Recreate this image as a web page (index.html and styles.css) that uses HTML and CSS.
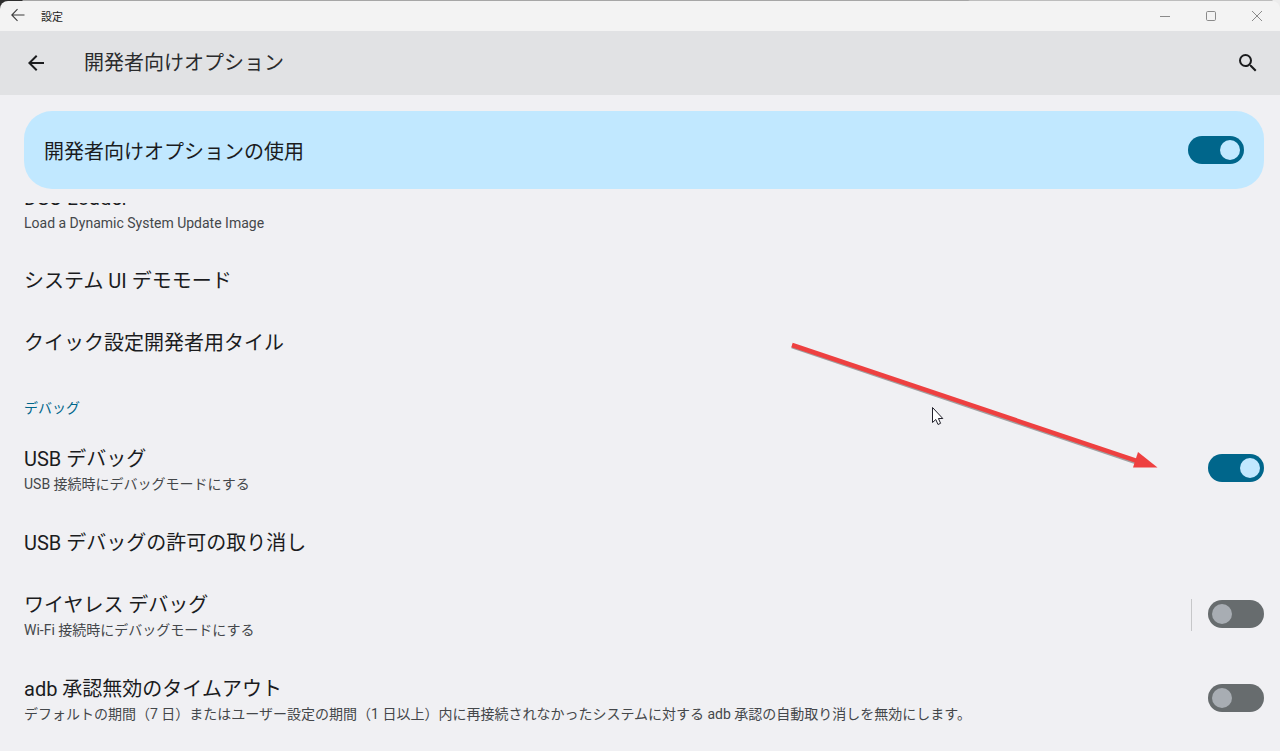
FILE: index.html
```html
<!DOCTYPE html>
<html lang="ja">
<head>
<meta charset="utf-8">
<title>設定</title>
<link rel="stylesheet" href="styles.css">
</head>
<body>
<div class="window">
  <header class="titlebar">
    <svg class="tb-back" width="16" height="16" viewBox="0 0 16 16"><path d="M14.5 8H2M7.5 2.2 1.8 8l5.7 5.8" fill="none" stroke="#3c3c3c" stroke-width="1.1"/></svg>
    <span class="tb-title">設定</span>
    <div class="tb-controls">
      <svg class="tb-btn" width="46" height="30" viewBox="0 0 46 30"><path d="M18 15.5h10" stroke="#8a8a8a" stroke-width="1"/></svg>
      <svg class="tb-btn" width="46" height="30" viewBox="0 0 46 30"><rect x="18.5" y="10.5" width="9" height="9" rx="1.2" fill="none" stroke="#8a8a8a"/></svg>
      <svg class="tb-btn" width="46" height="30" viewBox="0 0 46 30"><path d="M18 10l10 10M28 10 18 20" stroke="#8a8a8a" stroke-width="1"/></svg>
    </div>
  </header>
  <div class="appbar">
    <svg class="ab-back" width="24" height="24" viewBox="0 0 24 24"><path d="M20 11H7.83l5.59-5.59L12 4l-8 8 8 8 1.41-1.41L7.83 13H20v-2z" fill="#1b1c1e"/></svg>
    <h1 class="ab-title">開発者向けオプション</h1>
    <svg class="ab-search" width="24" height="24" viewBox="0 0 24 24"><path d="M15.5 14h-.79l-.28-.27A6.47 6.47 0 0 0 16 9.5 6.5 6.5 0 1 0 9.5 16c1.61 0 3.09-.59 4.23-1.57l.27.28v.79l5 4.99L20.49 19l-4.99-5zm-6 0C7.01 14 5 11.99 5 9.5S7.01 5 9.5 5 14 7.01 14 9.5 11.99 14 9.5 14z" fill="#1b1c1e"/></svg>
  </div>
  <main class="content">
    <section class="hero">
      <span class="hero-label">開発者向けオプションの使用</span>
      <span class="switch on on-hero"><span class="knob"></span></span>
    </section>
    <div class="list">
      <div class="scroll">
        <div class="row two first">
          <div class="text"><div class="title">DSU Loader</div><div class="sub">Load a Dynamic System Update Image</div></div>
        </div>
        <div class="row one"><div class="title">システム UI デモモード</div></div>
        <div class="row one"><div class="title">クイック設定開発者用タイル</div></div>
        <div class="category">デバッグ</div>
        <div class="row two">
          <div class="text"><div class="title">USB デバッグ</div><div class="sub">USB 接続時にデバッグモードにする</div></div>
          <span class="switch on"><span class="knob"></span></span>
        </div>
        <div class="row one"><div class="title">USB デバッグの許可の取り消し</div></div>
        <div class="row two">
          <div class="text"><div class="title">ワイヤレス デバッグ</div><div class="sub">Wi-Fi 接続時にデバッグモードにする</div></div>
          <span class="divider"></span>
          <span class="switch"><span class="knob"></span></span>
        </div>
        <div class="row two">
          <div class="text"><div class="title">adb 承認無効のタイムアウト</div><div class="sub">デフォルトの期間（7 日）またはユーザー設定の期間（1 日以上）内に再接続されなかったシステムに対する adb 承認の自動取り消しを無効にします。</div></div>
          <span class="switch"><span class="knob"></span></span>
        </div>
      </div>
    </div>
  </main>
  <svg class="annotation" width="1280" height="751" viewBox="0 0 1280 751">
    <path d="M792 346.2 1142 464" stroke="#7d7d7d" stroke-width="4.5" fill="none" opacity=".7"/>
    <path d="M792 345 1142 462.6" stroke="#ee4040" stroke-width="4.5" fill="none"/>
    <path d="M1138 452 1157.500 467.500H1133z" fill="#ee4040"/>
    <path d="M932.5 407.500v15l3.300-3 2.200 5 2.600-1.200-2.200-4.800h4.400z" fill="#fff" stroke="#20202a" stroke-width="1"/>
  </svg>
</div>
</body>
</html>
```

FILE: styles.css
```css
* { box-sizing: border-box; }
html, body { margin: 0; height: 100%; overflow: hidden; background: #f0f0f3; }
body { font-family: Roboto, "Noto Sans CJK JP", sans-serif; color: #1b1c1e; }

.window { position: relative; height: 751px; display: flex; flex-direction: column; overflow: hidden; background: linear-gradient(90deg, #2e2e2e 22px, #a6a6a6 23px, #a6a6a6 968px, #bdbdbd 970px, #bdbdbd 1272px, #ececec 1273px); }

.titlebar { height: 30px; margin-top: 1px; flex: none; display: flex; align-items: center; background: #f3f3f3; border-radius: 8px 8px 0 0; padding-left: 10px; }
.tb-back { flex: none; margin-top: -3px; }
.tb-title { margin-left: 15px; font-size: 11px; color: #222; font-family: "Noto Sans CJK JP", sans-serif; }
.tb-controls { margin-left: auto; display: flex; margin-top: -1px; }
.tb-btn { display: block; }

.appbar { height: 64px; flex: none; display: flex; align-items: center; background: #e1e2e4; padding: 0 20px 0 24px; }
.ab-back { flex: none; }
.ab-title { margin: -4px 0 0 36px; font-size: 20px; font-weight: 400; color: #2a2b2d; }
.ab-search { flex: none; margin-left: auto; }

.content { flex: 1; min-height: 0; display: flex; flex-direction: column; background: #f0f0f3; }

.hero { flex: none; height: 78px; margin: 16px 16px 14px 24px; padding: 0 20px; display: flex; align-items: center; justify-content: space-between; background: #c1e8ff; border-radius: 28px; }
.hero-label { font-size: 20px; color: #1b1c1e; }

.list { flex: 1; min-height: 0; overflow: hidden; }
.scroll { margin-top: -36px; }

.row { display: flex; padding: 0 16px 0 24px; }
.row.one { height: 62px; align-items: center; }
.row.two { height: 84px; padding-top: 17px; }
.row.two.first { height: 83px; }
.text { flex: 1; min-width: 0; }
.title { font-size: 20px; line-height: 28px; color: #1b1c1e; }
.sub { font-size: 14px; line-height: 20px; margin-top: 1px; color: #44474a; }
.category { height: 54px; padding: 24px 24px 0; font-size: 14px; line-height: 20px; color: #00668b; }

.switch { flex: none; width: 56px; height: 28px; margin-top: 9px; border-radius: 14px; background: #676c6e; padding: 4px; display: flex; }
.switch .knob { width: 20px; height: 20px; border-radius: 50%; background: #a8adb3; }
.switch.on { background: #00668b; justify-content: flex-end; }
.switch.on .knob { background: #c1e8ff; }
.switch.on-hero { margin-top: 0; }

.divider { flex: none; width: 1px; height: 32px; margin: 8px 16px 0 0; background: #c6c7c9; }

.annotation { position: absolute; left: 0; top: 0; pointer-events: none; }
```
